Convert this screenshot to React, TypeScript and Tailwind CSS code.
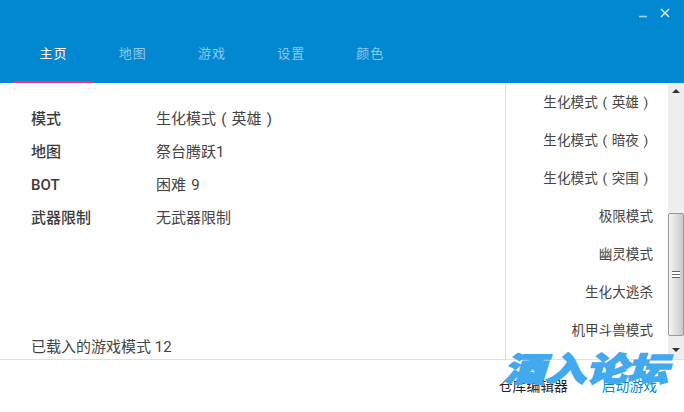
const tabs = ["主页", "地图", "游戏", "设置", "颜色"];

const rows = [
  { label: "模式", value: "生化模式 ( 英雄 )" },
  { label: "地图", value: "祭台腾跃1" },
  { label: "BOT", value: "困难 9" },
  { label: "武器限制", value: "无武器限制" },
];

const modes = [
  "生化模式 ( 英雄 )\u00a0",
  "生化模式 ( 暗夜 )\u00a0",
  "生化模式 ( 突围 )\u00a0",
  "极限模式",
  "幽灵模式",
  "生化大逃杀",
  "机甲斗兽模式",
];

const font = "font-['Roboto','Noto_Sans_CJK_SC',sans-serif]";

export default function App() {
  return (
    <div className={`relative flex h-[412px] w-[684px] flex-col overflow-hidden bg-white ${font}`}>
      {/* Title bar and tabs */}
      <header className="flex h-[83px] flex-col bg-[#0288d1]">
        <div className="flex h-[25px] items-center justify-end gap-[12px] pr-[14px]">
          <svg width="10" height="10" viewBox="0 0 10 10" className="mt-[5px]">
            <path d="M1 6.5h8" stroke="#a5d5ef" strokeWidth="1.6" />
          </svg>
          <svg width="10" height="10" viewBox="0 0 10 10">
            <path d="M1 1l8 8M9 1l-8 8" stroke="#d5ecf8" strokeWidth="1.5" />
          </svg>
        </div>
        <nav className="mt-auto flex pl-[14px]">
          {tabs.map((tab, i) => (
            <div
              key={tab}
              className={`flex h-[58px] w-[79.2px] items-center justify-center border-b-2 pt-[2px] text-[13px] tracking-[1px] ${
                i === 0 ? "border-[#ff2d78] text-white" : "border-transparent text-[#8cc8ea]"
              }`}
            >
              {tab}
            </div>
          ))}
        </nav>
      </header>

      {/* Main area */}
      <div className="flex h-[276px]">
        <section className="flex w-[505px] flex-col pl-[31px]">
          <div className="flex flex-col pt-[20px]">
            {rows.map((row) => (
              <div key={row.label} className="flex h-[33px] items-center text-[15px] [word-spacing:1.5px]">
                <span className="w-[125px] font-medium text-[#3a3a3a]">{row.label}</span>
                <span className="text-[#444444]">{row.value}</span>
              </div>
            ))}
          </div>
          <p className="mt-auto pb-[1px] text-[15px] text-[#444444]">已载入的游戏模式 12</p>
        </section>

        <aside className="flex flex-1 border-l border-[#e0e0e0]">
          <ul className="flex w-[162px] flex-col pr-[15px]">
            {modes.map((mode) => (
              <li
                key={mode}
                className="flex h-[38px] items-center justify-end whitespace-pre text-[13.6px] text-[#444444] [word-spacing:1.3px]"
              >
                {mode}
              </li>
            ))}
          </ul>
          <div className="flex w-[16px] flex-col bg-[#eeeeee]">
            <div className="flex h-[16px] items-center justify-center">
              <div className="h-0 w-0 border-x-[4px] border-b-[4px] border-x-transparent border-b-[#333333]" />
            </div>
            <div className="mt-[114px] flex h-[123px] items-center justify-center rounded-[2px] border border-[#999999] bg-gradient-to-r from-[#f4f4f4] via-[#e0e0e0] to-[#c8c8c8]">
              <div className="h-[7px] w-[8px] border-y border-[#666666] bg-[linear-gradient(#ffffff_0_2px,#666666_2px_3px,#ffffff_3px)]" />
            </div>
            <div className="mt-auto flex h-[18px] items-center justify-center">
              <div className="h-0 w-0 border-x-[4px] border-t-[4px] border-x-transparent border-t-[#333333]" />
            </div>
          </div>
        </aside>
      </div>

      {/* Footer */}
      <footer className="flex h-[53px] items-start justify-end gap-[34px] border-t border-[#e0e0e0] pr-[27px] pt-[16px] text-[13.8px]">
        <span className="text-[#222222]">仓库编辑器</span>
        <span className="text-[#0288d1]">启动游戏</span>
      </footer>

      {/* Site watermark over the corner */}
      <div className="absolute left-[504px] top-[347px] origin-top-left scale-y-[0.8] text-[41px] leading-[50px] font-black italic whitespace-nowrap text-[#42a9ee] [-webkit-text-stroke:2px_#42a9ee] font-['Noto_Sans_CJK_SC',sans-serif]">
        酒入论坛
      </div>
    </div>
  );
}
